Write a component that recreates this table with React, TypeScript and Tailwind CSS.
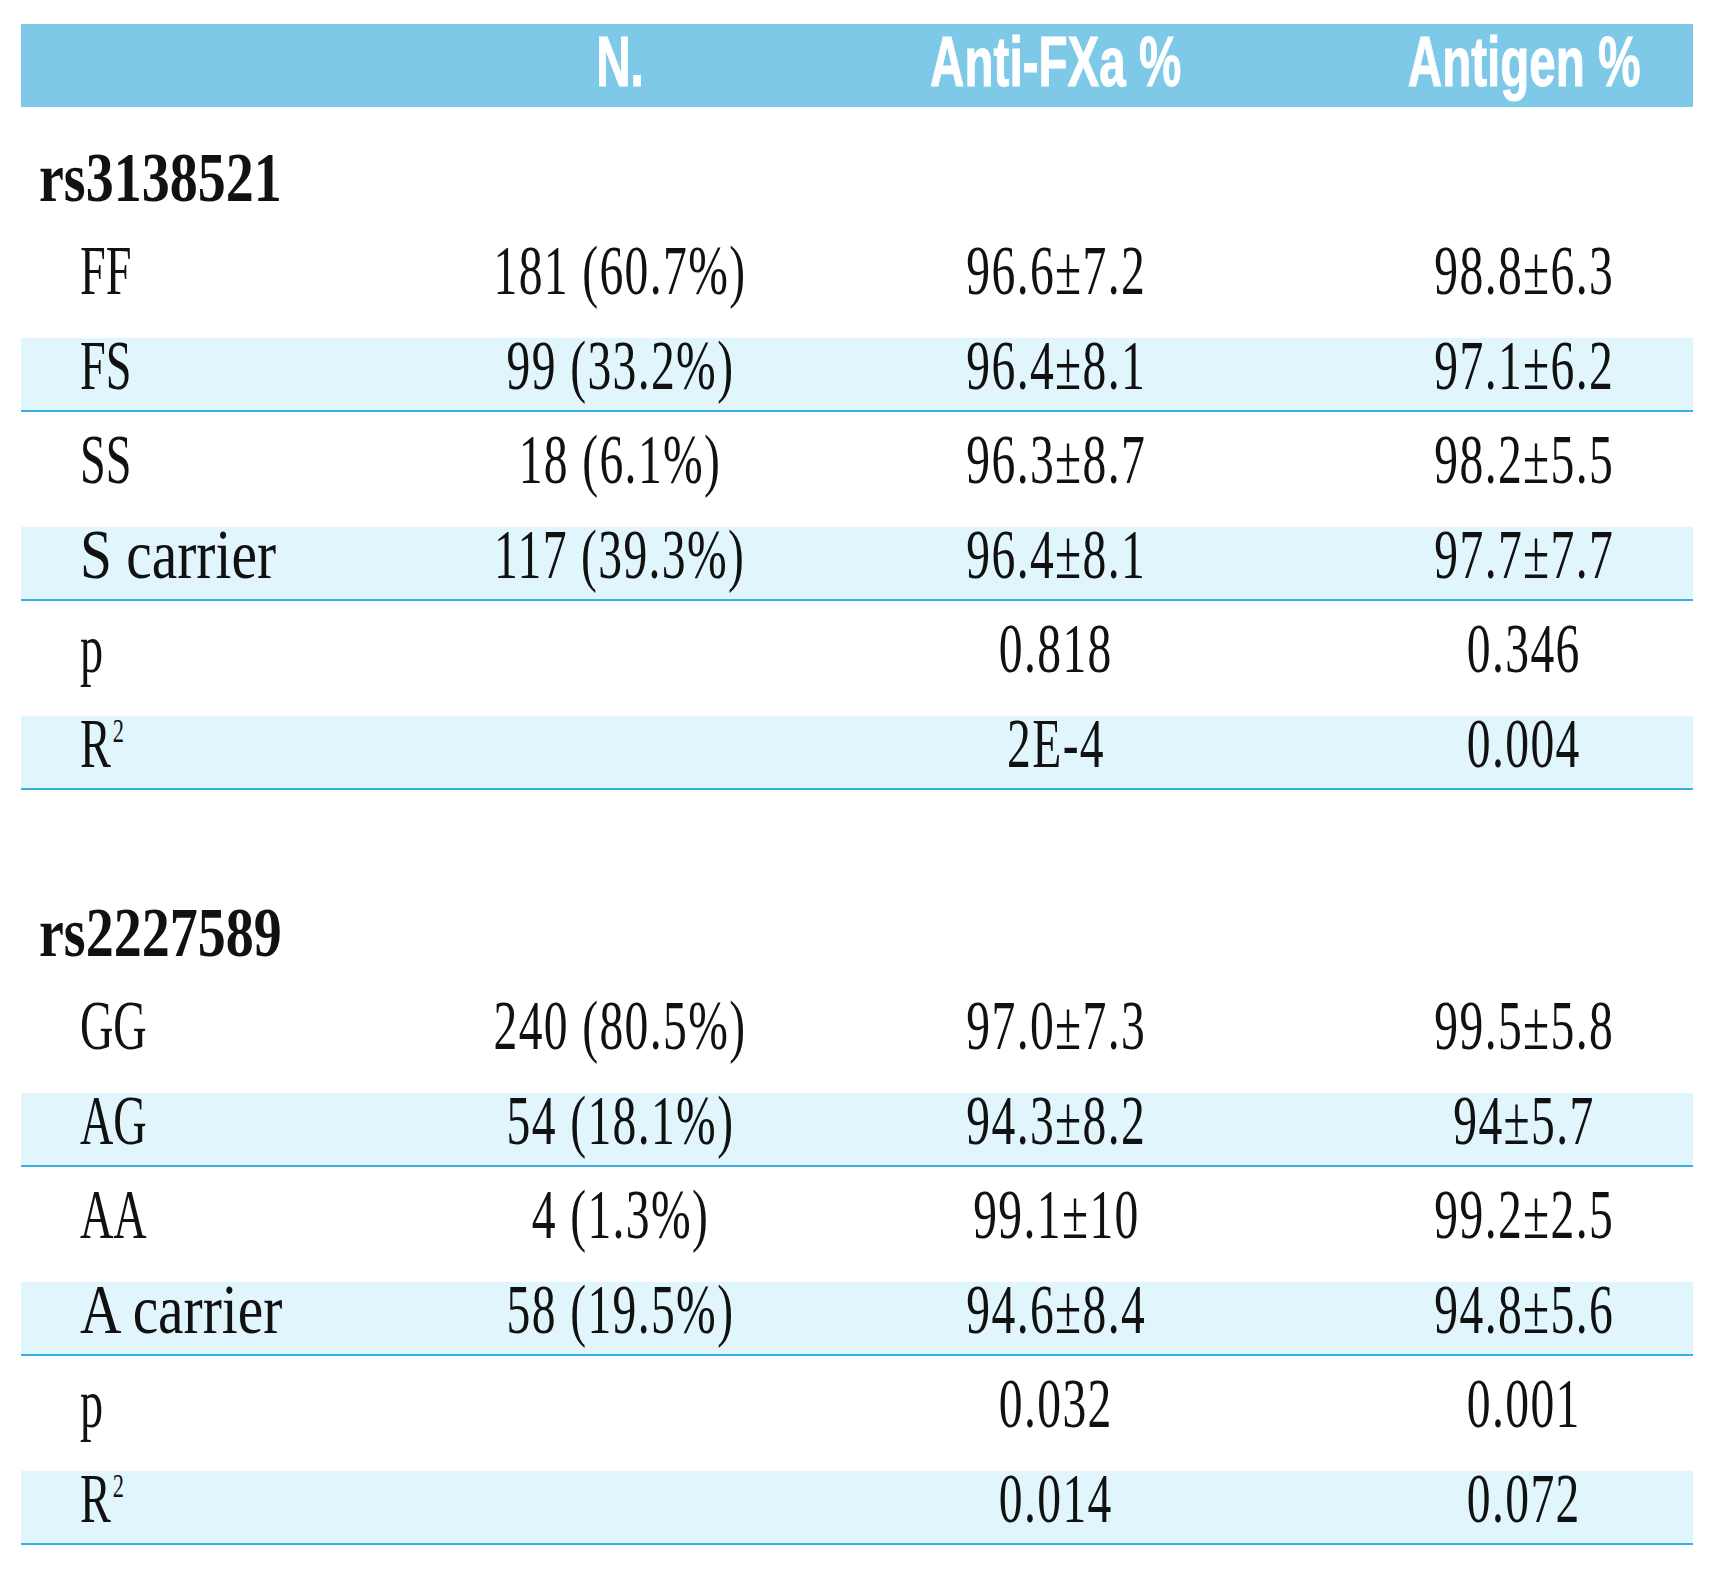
import clsx from "clsx";

interface RowData {
  label: string;
  sup?: string;
  n?: string;
  fxa: string;
  ag: string;
  wide?: boolean;
}

const serif = "font-['Liberation_Serif','Times_New_Roman',serif]";
const cols = "grid grid-cols-[462px_274px_598px_338px]";

const sections: { title: string; rows: RowData[] }[] = [
  {
    title: "rs3138521",
    rows: [
      { label: "FF", n: "181 (60.7%)", fxa: "96.6±7.2", ag: "98.8±6.3" },
      { label: "FS", n: "99 (33.2%)", fxa: "96.4±8.1", ag: "97.1±6.2" },
      { label: "SS", n: "18 (6.1%)", fxa: "96.3±8.7", ag: "98.2±5.5" },
      { label: "S carrier", n: "117 (39.3%)", fxa: "96.4±8.1", ag: "97.7±7.7", wide: true },
      { label: "p", fxa: "0.818", ag: "0.346" },
      { label: "R", sup: "2", fxa: "2E-4", ag: "0.004" },
    ],
  },
  {
    title: "rs2227589",
    rows: [
      { label: "GG", n: "240 (80.5%)", fxa: "97.0±7.3", ag: "99.5±5.8" },
      { label: "AG", n: "54 (18.1%)", fxa: "94.3±8.2", ag: "94±5.7" },
      { label: "AA", n: "4 (1.3%)", fxa: "99.1±10", ag: "99.2±2.5" },
      { label: "A carrier", n: "58 (19.5%)", fxa: "94.6±8.4", ag: "94.8±5.6", wide: true },
      { label: "p", fxa: "0.032", ag: "0.001" },
      { label: "R", sup: "2", fxa: "0.014", ag: "0.072" },
    ],
  },
];

function Num({ value }: { value?: string }) {
  return (
    <div className="flex justify-center whitespace-nowrap">
      {value && <span className="inline-block shrink-0 scale-x-[0.68] tracking-[2px]">{value}</span>}
    </div>
  );
}

function Row({ row, shaded }: { row: RowData; shaded: boolean }) {
  return (
    <div
      className={clsx(
        cols,
        shaded
          ? "h-[74px] border-b-2 border-[#3ab0e2] bg-[#e1f5fd] pt-[3px]"
          : "h-[115px] pt-[23px]"
      )}
    >
      <div className="whitespace-nowrap pl-[59px]">
        <span
          className={clsx(
            "inline-block origin-left",
            row.wide ? "scale-x-[0.82]" : "scale-x-[0.66]"
          )}
        >
          {row.label}
          {row.sup && (
            <sup className="relative -top-[25px] ml-[3px] align-baseline text-[34px]">{row.sup}</sup>
          )}
        </span>
      </div>
      <Num value={row.n} />
      <Num value={row.fxa} />
      <Num value={row.ag} />
    </div>
  );
}

export default function App() {
  return (
    <div className="min-h-[1591px] w-[1728px] bg-white pl-[21px] text-[#111]">
      {/* tail of the caption line cut off above */}
      <div className="h-[24px] overflow-hidden pl-[148px]">
        <div className={clsx(serif, "-mt-[42px] text-[40px] leading-none")}>p</div>
      </div>

      <div className="w-[1672px]">
        <div
          className={clsx(
            cols,
            "h-[83px] bg-[#7ec8e8] pt-[13px] font-['Liberation_Sans',Arial,sans-serif] text-[70px] font-bold leading-[50px] text-white [-webkit-text-stroke:1px_white]"
          )}
        >
          <div />
          <div className="flex justify-center whitespace-nowrap">
            <span className="inline-block shrink-0 scale-x-[0.68]">N.</span>
          </div>
          <div className="flex justify-center whitespace-nowrap">
            <span className="inline-block shrink-0 scale-x-[0.68]">Anti-FXa %</span>
          </div>
          <div className="flex justify-center whitespace-nowrap">
            <span className="inline-block shrink-0 scale-x-[0.68]">Antigen %</span>
          </div>
        </div>

        <div className={clsx(serif, "text-[70px] leading-[50px]")}>
          {sections.map((s, si) => (
            <div key={s.title} className={clsx(si > 0 && "mt-[72px]")}>
              <div className="h-[116px] whitespace-nowrap pl-[18px] pt-[46px] font-bold">
                <span className="inline-block origin-left scale-x-[0.8]">{s.title}</span>
              </div>
              {s.rows.map((r, i) => (
                <Row key={i} row={r} shaded={i % 2 === 1} />
              ))}
            </div>
          ))}
        </div>
      </div>
    </div>
  );
}
